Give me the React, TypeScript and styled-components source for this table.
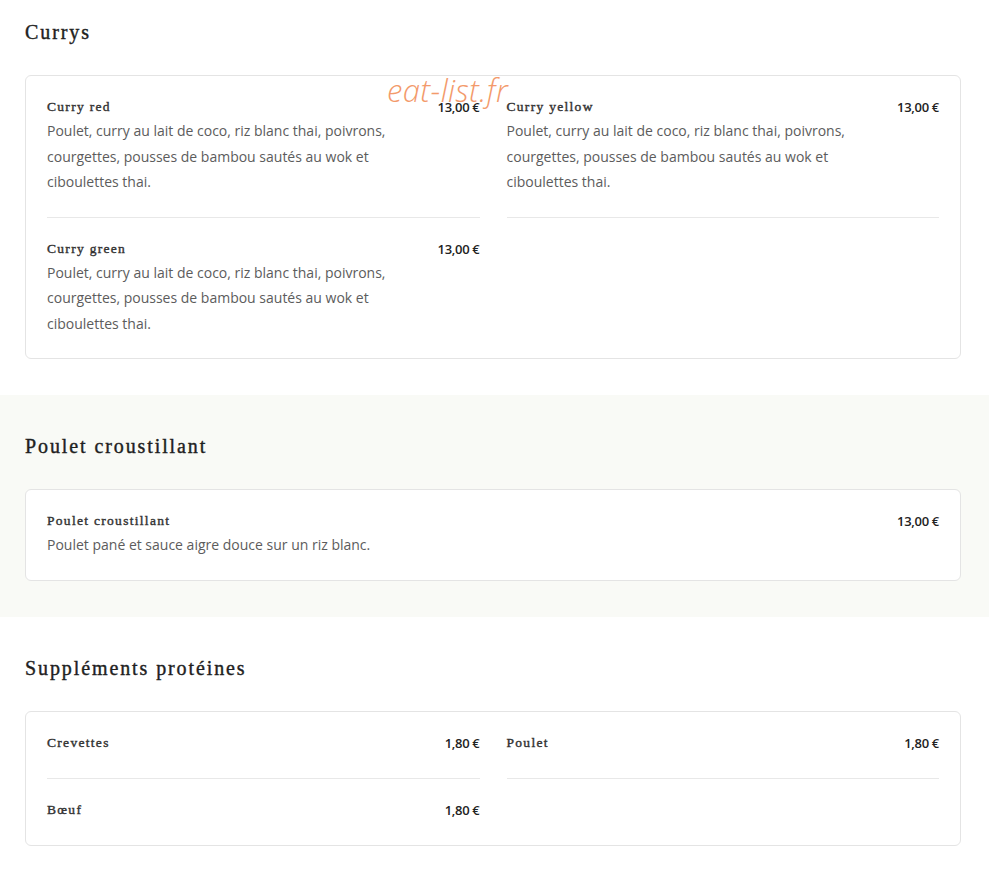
import React from 'react';
import styled, { createGlobalStyle } from 'styled-components';

type Dish = {
    name: string;
    price: string;
    description?: string;
};

type Category = {
    title: string;
    tinted?: boolean;
    columns: number;
    dishes: Dish[];
};

const curryText =
    'Poulet, curry au lait de coco, riz blanc thai, poivrons, courgettes, pousses de bambou sautés au wok et ciboulettes thai.';

const categories: Category[] = [
    {
        title: 'Currys',
        columns: 2,
        dishes: [
            { name: 'Curry red', price: '13,00 €', description: curryText },
            { name: 'Curry yellow', price: '13,00 €', description: curryText },
            { name: 'Curry green', price: '13,00 €', description: curryText },
        ],
    },
    {
        title: 'Poulet croustillant',
        tinted: true,
        columns: 1,
        dishes: [
            {
                name: 'Poulet croustillant',
                price: '13,00 €',
                description: 'Poulet pané et sauce aigre douce sur un riz blanc.',
            },
        ],
    },
    {
        title: 'Suppléments protéines',
        columns: 2,
        dishes: [
            { name: 'Crevettes', price: '1,80 €' },
            { name: 'Poulet', price: '1,80 €' },
            { name: 'Bœuf', price: '1,80 €' },
        ],
    },
];

const App = () => {
    return (
        <Page>
            <GlobalStyle />
            <Watermark>eat-list.fr</Watermark>
            {categories.map((cat, ci) => {
                const lastRowStart =
                    Math.floor((cat.dishes.length - 1) / cat.columns) * cat.columns;
                return (
                    <Section key={cat.title} tinted={cat.tinted} first={ci === 0}>
                        <SectionTitle>{cat.title}</SectionTitle>
                        <Card>
                            <Grid columns={cat.columns}>
                                {cat.dishes.map((dish, i) => (
                                    <Item
                                        key={dish.name}
                                        last={i >= lastRowStart}
                                        bare={!dish.description}
                                    >
                                        <Info>
                                            <DishName>{dish.name}</DishName>
                                            {dish.description && (
                                                <Description>{dish.description}</Description>
                                            )}
                                        </Info>
                                        <Price>{dish.price}</Price>
                                    </Item>
                                ))}
                            </Grid>
                        </Card>
                    </Section>
                );
            })}
        </Page>
    );
};

export default App;

// Styled Components
const GlobalStyle = createGlobalStyle`
    html, body {
        margin: 0;
        padding: 0;
        background: #ffffff;
    }
    body {
        font-family: 'Open Sans', sans-serif;
    }
`;

const Page = styled.div`
    position: relative;
    width: 989px;
    min-height: 889px;
    background: #ffffff;
`;

// watermark stamped over the screenshot
const Watermark = styled.div`
    position: absolute;
    left: 387px;
    top: 75px;
    font-family: 'Open Sans', sans-serif;
    font-style: italic;
    font-weight: 300;
    font-size: 31px;
    line-height: 1;
    letter-spacing: 0.4px;
    color: #f39a6b;
    z-index: 2;
    pointer-events: none;
`;

const Section = styled.section<{ tinted?: boolean; first?: boolean }>`
    padding: ${({ first }) => (first ? '17px' : '36px')} 28px 36px 25px;
    background: ${({ tinted }) => (tinted ? '#f9faf6' : 'transparent')};
`;

const SectionTitle = styled.h2`
    margin: 0 0 28px;
    font-family: 'Liberation Serif', 'Times New Roman', serif;
    font-size: 20px;
    line-height: 30px;
    font-weight: 400;
    letter-spacing: 1.9px;
    color: #1f1f1f;
    -webkit-text-stroke: 0.4px #1f1f1f;
`;

const Card = styled.div`
    background: #ffffff;
    border: 1px solid #e4e4e4;
    border-radius: 6px;
    padding: 0 21px;
`;

const Grid = styled.div<{ columns: number }>`
    display: grid;
    grid-template-columns: repeat(${({ columns }) => columns}, 1fr);
    column-gap: 27px;
`;

const Item = styled.div<{ last?: boolean; bare?: boolean }>`
    display: flex;
    align-items: flex-start;
    gap: 20px;
    padding: 20px 0 ${({ bare }) => (bare ? '24px' : '22px')};
    border-bottom: ${({ last }) => (last ? 'none' : '1px solid #e8e8e8')};
`;

const Info = styled.div`
    flex: 1;
    min-width: 0;
`;

const DishName = styled.div`
    font-family: 'Liberation Serif', 'Times New Roman', serif;
    font-size: 13.5px;
    line-height: 22px;
    font-weight: 400;
    letter-spacing: 1.3px;
    color: #333333;
    -webkit-text-stroke: 0.4px #333333;
`;

const Description = styled.div`
    font-family: 'Open Sans', sans-serif;
    font-size: 14px;
    line-height: 25.5px;
    font-weight: 400;
    color: #5c5c5c;
    max-width: 370px;
`;

const Price = styled.div`
    font-family: 'Open Sans', sans-serif;
    font-size: 13px;
    line-height: 22px;
    font-weight: 600;
    color: #222222;
    white-space: nowrap;
    letter-spacing: -0.3px;
`;
